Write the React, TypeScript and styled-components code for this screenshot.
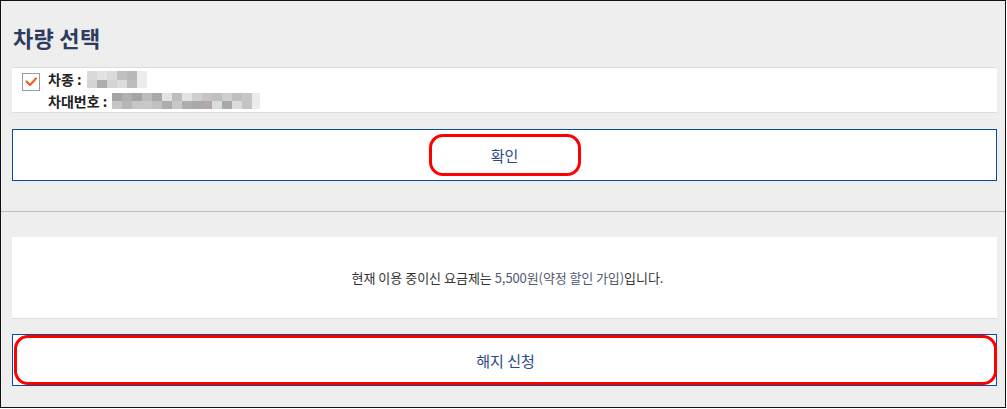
import React from "react";
import styled, { createGlobalStyle } from "styled-components";

const GlobalStyle = createGlobalStyle`
  html, body { margin: 0; padding: 0; background: #ffffff; }
  body { font-family: "Noto Sans CJK KR", "Noto Sans", sans-serif; }
  * { box-sizing: border-box; }
`;

const Frame = styled.div`
  width: 1006px;
  height: 408px;
  border: 1px solid #111;
  background: #eeeeee;
  display: flex;
  flex-direction: column;
`;

const Section = styled.div`
  padding: 0 8px 0 11px;
  display: flex;
  flex-direction: column;
`;

const Title = styled.h2`
  margin: 20px 0 0 1px;
  font-size: 22px;
  line-height: 32px;
  font-weight: 700;
  color: #2c3b5f;
  letter-spacing: 0.3px;
`;

const VehicleBox = styled.div`
  margin-top: 14px;
  background: #fff;
  border-top: 1px solid #dcdcdc;
  border-bottom: 1px solid #dcdcdc;
  display: grid;
  grid-template-columns: 18px 1fr;
  column-gap: 8px;
  padding-left: 10px;
`;

const CheckBox = styled.span`
  grid-row: 1 / span 2;
  width: 18px;
  height: 18px;
  margin-top: 5px;
  border: 1px solid #9a9a9a;
  background: #fff;
  display: flex;
  align-items: center;
  justify-content: center;
`;

const InfoRow = styled.div`
  display: flex;
  align-items: center;
  height: 22px;
  font-size: 14px;
  font-weight: 700;
  color: #222;
  white-space: pre;
`;

const Mosaic = styled.svg`
  display: block;
  margin-left: 2px;
`;

const ActionButton = styled.button<{ $top: number }>`
  margin-top: ${(p) => p.$top}px;
  height: 52px;
  width: 100%;
  background: #fff;
  border: 1px solid #0b4a96;
  display: flex;
  align-items: center;
  justify-content: center;
  padding: 0;
  font-family: "Noto Sans CJK KR", "Noto Sans", sans-serif;
  font-size: 15px;
  color: #2a4a86;
  cursor: pointer;
`;

const Highlight = styled.span<{ $fill?: boolean }>`
  display: flex;
  align-items: center;
  justify-content: center;
  border: 3px solid #ff0000;
  border-radius: 14px;
  ${(p) =>
    p.$fill
      ? `align-self: stretch; flex: 1; margin: 0 -1px 0 1px;`
      : `width: 152px; height: 42px;`}
`;

const Divider = styled.hr`
  margin: 30px 0 0 0;
  border: 0;
  border-top: 1px solid #bbbbbb;
  height: 0;
  width: 100%;
`;

const InfoBox = styled.div`
  margin-top: 25px;
  height: 82px;
  background: #fff;
  border-bottom: 1px solid #dcdcdc;
  display: flex;
  align-items: center;
  justify-content: center;
  padding-top: 0;
  padding-left: 6px;
  font-size: 13px;
  color: #333;
  white-space: pre;
`;

const PlanText = styled.span`
  color: #4f5a72;
  letter-spacing: -0.1px;
`;

const grays = [
  "#cfcfcf", "#bdbdbd", "#b0b0b0", "#dadada", "#c4c4c4", "#a9a9a9",
  "#c8c8c8", "#b6b6b6", "#d4d4d4", "#b2a8a8", "#c0c0c0", "#e2e2e2",
  "#a4a4a4", "#cbcbcb", "#b9b9b9", "#dcdcdc", "#adadad", "#c6c6c6",
];

const Blur: React.FC<{ width: number; height: number; seed: number }> = ({ width, height, seed }) => {
  const cw = 10;
  const ch = Math.ceil(height / 2);
  const cells: React.ReactNode[] = [];
  const cols = Math.ceil(width / cw);
  for (let r = 0; r < 2; r++) {
    for (let c = 0; c < cols; c++) {
      const i = (c * 7 + r * 5 + seed * 3 + ((c * c) % 5)) % grays.length;
      const last = c === cols - 1;
      cells.push(
        <rect
          key={`${r}-${c}`}
          x={c * cw}
          y={r * ch}
          width={cw}
          height={ch}
          fill={last ? "#ececec" : grays[i]}
        />
      );
    }
  }
  return (
    <Mosaic width={width} height={height} viewBox={`0 0 ${width} ${height}`}>
      {cells}
    </Mosaic>
  );
};

export default function App() {
  return (
    <>
      <GlobalStyle />
      <Frame>
        <Section>
          <Title>차량 선택</Title>
          <VehicleBox>
            <CheckBox>
              <svg width="16" height="16" viewBox="0 0 16 16">
                <polyline
                  points="3.5,7.5 7,11 13,4.5"
                  fill="none"
                  stroke="#f2621f"
                  strokeWidth="2.2"
                  strokeLinecap="round"
                  strokeLinejoin="round"
                />
              </svg>
            </CheckBox>
            <InfoRow>
              {"차종 : "}
              <Blur width={60} height={17} seed={1} />
            </InfoRow>
            <InfoRow>
              {"차대번호 : "}
              <Blur width={148} height={16} seed={4} />
            </InfoRow>
          </VehicleBox>
          <ActionButton $top={16}>
            <Highlight>확인</Highlight>
          </ActionButton>
        </Section>
        <Divider />
        <Section>
          <InfoBox>
            {"현재 이용 중이신 요금제는 "}
            <PlanText>5,500원(약정 할인 가입)</PlanText>
            {"입니다."}
          </InfoBox>
          <ActionButton $top={15}>
            <Highlight $fill>해지 신청</Highlight>
          </ActionButton>
        </Section>
      </Frame>
    </>
  );
}
